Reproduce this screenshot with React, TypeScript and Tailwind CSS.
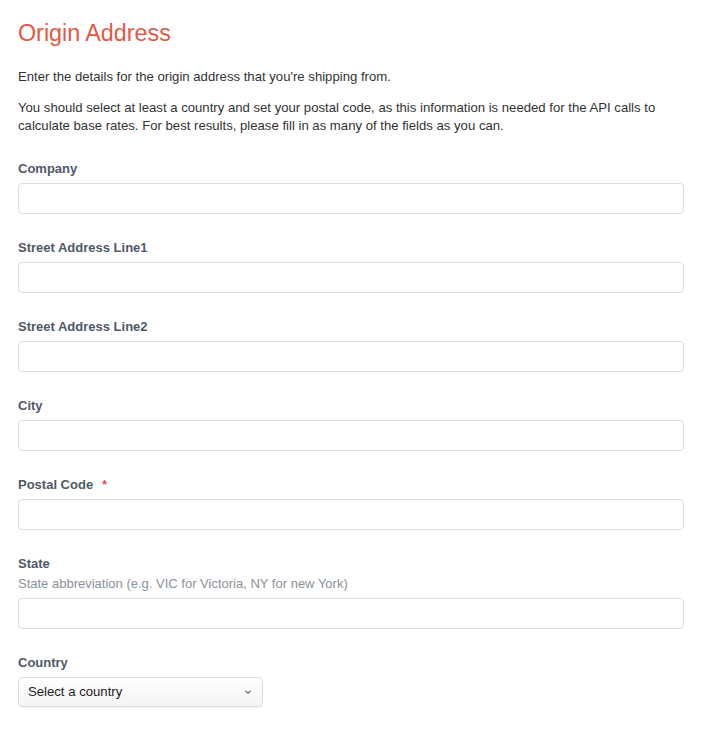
import React from "react";

const Field = ({ label, required, help }: { label: string; required?: boolean; help?: string }) => (
  <div className="mb-[25px]">
    <div className="h-[18px] text-[13px] leading-[18px] font-bold text-[#4f5869] flex items-center">
      {label}
      {required && <span className="ml-[9px] text-[#e0523f] text-[12px] leading-none">*</span>}
    </div>
    {help && <div className="text-[13px] leading-[18px] text-[#8a929c] mt-[2px]">{help}</div>}
    <div className="mt-[5px] h-[31px] rounded-[4px] border border-[#dedede] bg-white" />
  </div>
);

export default function App() {
  return (
    <div
      className="bg-white min-h-[729px] pl-[18px] pr-[19px] pt-[18px] text-[#333]"
      style={{ fontFamily: '"Liberation Sans", Arial, sans-serif' }}
    >
      <h1 className="text-[23.3px] leading-[30px] text-[#df5a47] font-normal">Origin Address</h1>
      <p className="mt-[20px] text-[13.15px] leading-[18px]">
        Enter the details for the origin address that you're shipping from.
      </p>
      <p className="mt-[13px] text-[13.15px] leading-[18px]">
        You should select at least a country and set your postal code, as this information is needed for the API calls to
        calculate base rates. For best results, please fill in as many of the fields as you can.
      </p>
      <div className="mt-[25px]">
        <Field label="Company" />
        <Field label="Street Address Line1" />
        <Field label="Street Address Line2" />
        <Field label="City" />
        <Field label="Postal Code" required />
        <Field label="State" help="State abbreviation (e.g. VIC for Victoria, NY for new York)" />
        <div>
          <div className="text-[13px] leading-[18px] font-bold text-[#4f5869]">Country</div>
          <div className="mt-[5px] w-[245px] h-[30px] rounded-[4px] border border-[#dcdcdc] bg-gradient-to-b from-white to-[#f4f4f4] flex items-center justify-between pl-[9px] pr-[10px] shadow-[0_1px_1px_rgba(0,0,0,0.04)]">
            <span className="text-[13.15px] text-[#222]">Select a country</span>
            <svg width="8" height="6" viewBox="0 0 8 6" fill="none">
              <path d="M1.5 2 L4 4.3 L6.5 2" stroke="#555" strokeWidth="1.1" />
            </svg>
          </div>
        </div>
      </div>
    </div>
  );
}
